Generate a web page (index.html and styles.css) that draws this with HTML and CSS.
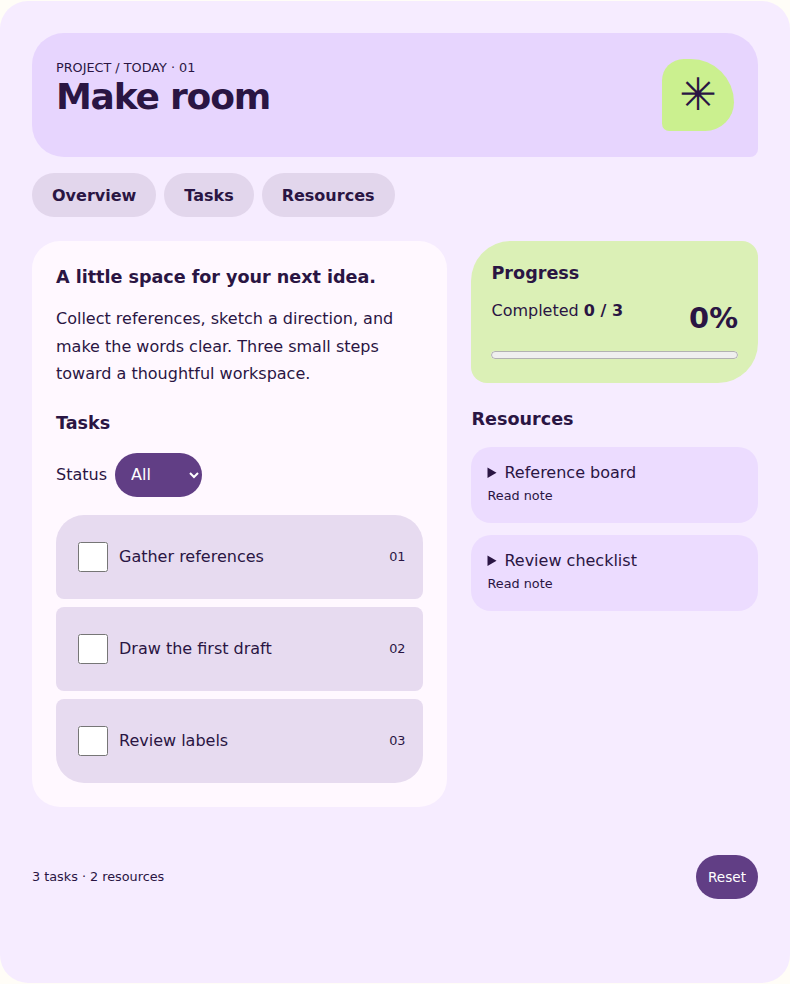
FILE: index.html
```html
<!DOCTYPE html>
<html lang="en">
<head>
<meta charset="utf-8">
<title>Make room</title>
<link rel="stylesheet" href="styles.css">
</head>
<body>
<div class="shell">
  <header class="hero">
    <div class="hero-text">
      <p class="eyebrow">PROJECT / TODAY · 01</p>
      <h1 class="title">Make room</h1>
    </div>
    <div class="badge" aria-hidden="true">✳</div>
  </header>
  <nav class="tabs">
    <a class="tab">Overview</a>
    <a class="tab">Tasks</a>
    <a class="tab">Resources</a>
  </nav>
  <main class="layout">
    <section class="card">
      <h2 class="lead">A little space for your next idea.</h2>
      <p class="intro">Collect references, sketch a direction, and make the words clear. Three small steps toward a thoughtful workspace.</p>
      <h2 class="section-title">Tasks</h2>
      <div class="filter">
        <label for="status">Status</label>
        <select id="status" class="select"><option>All</option><option>Open</option><option>Done</option></select>
      </div>
      <ul class="tasks">
        <li class="task task-first"><input type="checkbox" class="check"><span class="task-name">Gather references</span><span class="task-num">01</span></li>
        <li class="task"><input type="checkbox" class="check"><span class="task-name">Draw the first draft</span><span class="task-num">02</span></li>
        <li class="task task-last"><input type="checkbox" class="check"><span class="task-name">Review labels</span><span class="task-num">03</span></li>
      </ul>
    </section>
    <aside class="side">
      <section class="progress-card">
        <h2 class="progress-title">Progress</h2>
        <div class="progress-row">
          <p class="completed">Completed <b>0 / 3</b></p>
          <span class="percent">0%</span>
        </div>
        <progress class="bar" value="0" max="3"></progress>
      </section>
      <h2 class="res-title">Resources</h2>
      <div class="res-list">
        <details class="res"><summary>Reference board</summary></details>
        <details class="res"><summary>Review checklist</summary></details>
      </div>
    </aside>
  </main>
  <footer class="foot">
    <span class="foot-text">3 tasks · 2 resources</span>
    <button class="reset">Reset</button>
  </footer>
</div>
</body>
</html>
```
FILE: styles.css
```css
* { box-sizing: border-box; }
html, body { margin: 0; padding: 0; }
body {
  background: #fffdf7;
  color: #2a1543;
  font-family: "DejaVu Sans", sans-serif;
  padding: 1px 0;
}
.shell {
  background: #f6ecff;
  border-radius: 28px;
  height: 982px;
  padding: 32px;
}
.hero {
  background: #e7d5fe;
  border-radius: 32px 32px 8px 32px;
  height: 124px;
  padding: 26px 24px 0;
  display: flex;
  justify-content: space-between;
  align-items: flex-start;
}
.eyebrow { margin: 0; font-size: 12.8px; line-height: 17px; }
.title { margin: 0; font-size: 36px; line-height: 41px; font-weight: 700; letter-spacing: -1.2px; }
.badge {
  width: 72px;
  height: 72px;
  background: #cbf08f;
  border-radius: 24px 48px 32px 8px;
  display: flex;
  align-items: center;
  justify-content: center;
  font-size: 44.8px;
  line-height: 72px;
}
.tabs { display: flex; gap: 8px; margin-top: 16px; }
.tab {
  background: #e2d6ec;
  border-radius: 22px;
  height: 44px;
  padding: 0 20px;
  display: flex;
  align-items: center;
  font-size: 16px;
  font-weight: 700;
}
.layout {
  display: grid;
  grid-template-columns: 1.45fr 1fr;
  gap: 24px;
  margin-top: 24px;
  align-items: start;
}
.card {
  background: #fff8ff;
  border-radius: 28px;
  padding: 24px;
  height: 566px;
}
.lead { margin: 0; font-size: 17.6px; line-height: 24px; font-weight: 700; letter-spacing: -0.03px; }
.intro { margin: 16px 0 0; font-size: 16px; line-height: 27.5px; }
.section-title { margin: 23px 0 0; font-size: 17.6px; line-height: 24px; font-weight: 700; }
.filter { display: flex; align-items: center; gap: 8px; margin-top: 18px; font-size: 16px; }
.select {
  background: #613e85;
  color: #fff;
  border: 0;
  border-radius: 22px;
  height: 44px;
  width: 87px;
  padding: 0 5px 0 12px;
  font: 16px "DejaVu Sans", sans-serif;
}
.tasks { list-style: none; margin: 18px 0 0; padding: 0; display: flex; flex-direction: column; gap: 8px; }
.task {
  background: #e7dbf0;
  border-radius: 8px;
  height: 84px;
  padding: 0 18px 0 22px;
  display: flex;
  align-items: center;
  font-size: 16px;
}
.task-first { border-radius: 28px 28px 8px 8px; }
.task-last { border-radius: 8px 8px 28px 28px; }
.check { width: 30px; height: 30px; margin: 0 11px 0 0; }
.task-name { flex: 1; }
.task-num { font-size: 12.8px; }
.side { display: flex; flex-direction: column; }
.progress-card {
  background: #dbf0b6;
  border-radius: 40px 16px 40px 16px;
  height: 142px;
  padding: 20px;
}
.progress-title { margin: 0; font-size: 17.6px; line-height: 24px; font-weight: 700; }
.progress-row { display: flex; justify-content: space-between; margin-top: 14px; }
.completed { margin: 0; font-size: 16px; line-height: 24px; }
.percent { font-size: 28.8px; line-height: 40px; font-weight: 700; margin-top: -1px; }
.bar { display: block; width: 100%; height: 16px; margin-top: 9px; }
.res-title { margin: 24px 0 0; font-size: 17.6px; line-height: 24px; font-weight: 700; }
.res-list { display: flex; flex-direction: column; gap: 12px; margin-top: 16px; }
.res {
  background: #ecdcff;
  border-radius: 20px;
  height: 76px;
  padding: 14px 16px;
  font-size: 16px;
}
.res summary { line-height: 24px; }
.res summary::after {
  content: "Read note";
  display: block;
  font-size: 12.8px;
  line-height: 22px;
}
.foot { display: flex; justify-content: space-between; align-items: center; margin-top: 48px; }
.foot-text { font-size: 12.8px; line-height: 43px; height: 43px; align-self: flex-start; }
.reset {
  background: #613e85;
  color: #fff;
  border: 0;
  border-radius: 22px;
  height: 44px;
  width: 62px;
  padding: 0;
  font: 13.6px "DejaVu Sans", sans-serif;
}
```
